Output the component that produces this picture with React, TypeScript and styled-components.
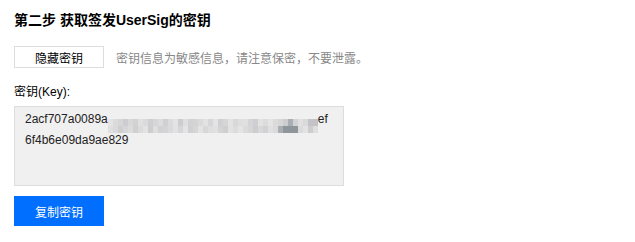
import React, { FunctionComponent, ReactElement } from 'react'
import styled, { createGlobalStyle } from 'styled-components'

const GlobalStyle = createGlobalStyle`
  body {
    margin: 0;
    background: #fff;
    font-family: Arial, "Liberation Sans", "Noto Sans CJK SC", sans-serif;
    color: #000;
  }
`

const Page = styled.section`
  display: flex;
  flex-direction: column;
  padding: 12px 14px;
`

const Title = styled.h3`
  font-size: 14px;
  font-weight: 700;
  line-height: 16px;
  margin: 0 0 18px;
`

const Row = styled.div`
  align-items: center;
  display: flex;
  gap: 12px;
  margin-bottom: 17px;
`

const Button = styled.button<{ $primary?: boolean }>`
  background: ${(p) => (p.$primary ? '#006eff' : '#fff')};
  border: 1px solid ${(p) => (p.$primary ? '#006eff' : '#ddd')};
  color: ${(p) => (p.$primary ? '#fff' : '#000')};
  cursor: pointer;
  font-family: inherit;
  font-size: 12px;
  height: ${(p) => (p.$primary ? '30px' : '22px')};
  padding: 0;
  width: 90px;
`

const Hint = styled.span`
  color: #888;
  font-size: 12px;
`

const Label = styled.label`
  display: block;
  font-size: 12px;
  line-height: 14px;
  margin-bottom: 7px;
`

const KeyBox = styled.div`
  background: #f0f0f0;
  border: 1px solid #ddd;
  box-sizing: border-box;
  color: #222;
  font-size: 12px;
  height: 80px;
  line-height: 14px;
  margin-bottom: 10px;
  padding: 5px 10px;
  width: 330px;
`

const Mosaic = styled.span`
  display: inline-grid;
  grid-auto-flow: column;
  grid-template-rows: 7px 7px;
  height: 14px;
  vertical-align: -3px;
`

const Cell = styled.span`
  display: block;
  width: 5px;
`

const tones = [
  'e4e4e4', 'dcdcdc', 'd6d6d8', 'e2e2e2', 'cfcfd2', 'dadada', 'd4d3d6', 'e0e0e0',
  'd2d2d4', 'dedede', 'd8d8d8', 'cdcdd0', 'e3e3e3', 'd6d6d6', 'dbdbdb', 'd0d0d2',
]

const cells = Array.from({ length: 84 }, (_, i) => {
  let c = tones[(i * 7 + (i >> 2)) % tones.length]
  if (i > 66 && i < 78 && i % 3 === 0) c = 'a9aeb4'
  if (i > 70 && i < 76 && i % 2 === 1) c = '8e969c'
  if (i >= 80 && i % 2 === 0) c = 'c4c4c8'
  return c
})

const App: FunctionComponent = (): ReactElement => (
  <Page>
    <GlobalStyle />
    <Title>第二步 获取签发UserSig的密钥</Title>

    <Row>
      <Button>隐藏密钥</Button>
      <Hint>密钥信息为敏感信息，请注意保密，不要泄露。</Hint>
    </Row>

    <Label>密钥(Key):</Label>
    <KeyBox>
      2acf707a0089a
      <Mosaic>
        {cells.map((c, i) => (
          <Cell key={i} style={{ background: `#${c}` }} />
        ))}
      </Mosaic>
      ef
      <br />
      6f4b6e09da9ae829
    </KeyBox>

    <Button $primary>复制密钥</Button>
  </Page>
)

export default App
